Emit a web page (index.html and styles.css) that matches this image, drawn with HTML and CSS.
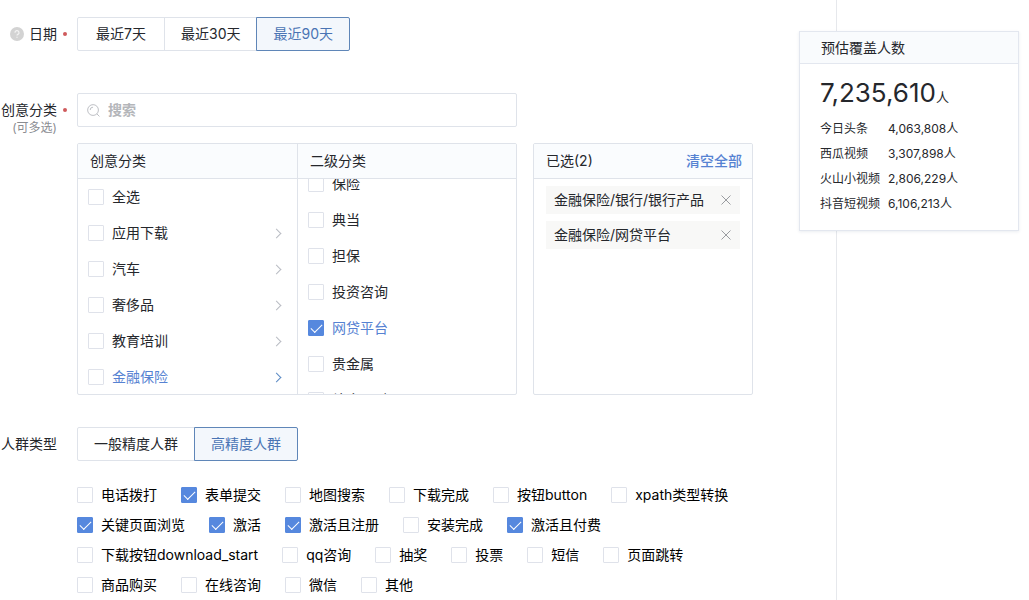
FILE: index.html
```html
<!DOCTYPE html>
<html lang="zh-CN">
<head>
<meta charset="utf-8">
<title>人群定向</title>
<link rel="stylesheet" href="styles.css">
</head>
<body>
<div class="page">
  <main class="main">
    <section class="field field-date">
      <div class="field-label" id="label-date">
        <svg class="help" viewBox="0 0 14 14" aria-hidden="true"><circle cx="7" cy="7" r="7" fill="#d3d3d3"/><path d="M5 5.8a2 2 0 1 1 2.9 1.6c-.6.3-.9.6-.9 1.1M7 9.8v1" fill="none" stroke="#f3f3f3" stroke-width="1.2"/></svg>
        <span>日期</span><i class="dot"></i>
      </div>
      <div class="segment" role="group" aria-labelledby="label-date">
        <button type="button" class="segment-btn">最近7天</button>
        <button type="button" class="segment-btn">最近30天</button>
        <button type="button" class="segment-btn active">最近90天</button>
      </div>
    </section>

    <section class="field field-category">
      <div class="field-label">
        <label for="search">创意分类</label><i class="dot"></i>
        <small class="hint">(可多选)</small>
      </div>
      <div class="picker">
        <div class="search">
          <svg class="search-icon" viewBox="0 0 14 14" aria-hidden="true"><circle cx="6.5" cy="6.5" r="5.8" fill="none" stroke="#b9bbc0"/><path d="M3.4 6.5A3.1 3.1 0 0 1 6.5 3.4M10.6 10.6L13.4 13.4" fill="none" stroke="#b9bbc0"/></svg>
          <input type="text" id="search" class="search-input" placeholder="搜索">
        </div>
        <div class="panel columns">
          <div class="column">
            <h2 class="panel-head">创意分类</h2>
            <ul class="list">
              <li class="item"><label class="check"><input type="checkbox">全选</label></li>
              <li class="item"><label class="check"><input type="checkbox">应用下载</label><i class="arrow"></i></li>
              <li class="item"><label class="check"><input type="checkbox">汽车</label><i class="arrow"></i></li>
              <li class="item"><label class="check"><input type="checkbox">奢侈品</label><i class="arrow"></i></li>
              <li class="item"><label class="check"><input type="checkbox">教育培训</label><i class="arrow"></i></li>
              <li class="item current"><label class="check"><input type="checkbox">金融保险</label><i class="arrow"></i></li>
            </ul>
          </div>
          <div class="column">
            <h2 class="panel-head">二级分类</h2>
            <ul class="list" id="sub-list">
              <li class="item"><label class="check"><input type="checkbox">保险</label></li>
              <li class="item"><label class="check"><input type="checkbox">典当</label></li>
              <li class="item"><label class="check"><input type="checkbox">担保</label></li>
              <li class="item"><label class="check"><input type="checkbox">投资咨询</label></li>
              <li class="item current"><label class="check"><input type="checkbox" checked>网贷平台</label></li>
              <li class="item"><label class="check"><input type="checkbox">贵金属</label></li>
              <li class="item"><label class="check"><input type="checkbox">综合理财</label></li>
            </ul>
          </div>
        </div>
        <div class="panel selected">
          <div class="panel-head"><span>已选(2)</span><button type="button" class="clear">清空全部</button></div>
          <ul class="tags">
            <li class="tag"><span>金融保险/银行/银行产品</span><button type="button" class="remove" aria-label="移除"><svg viewBox="0 0 10 10"><path d="M.5.5l9 9M9.5.5l-9 9"/></svg></button></li>
            <li class="tag"><span>金融保险/网贷平台</span><button type="button" class="remove" aria-label="移除"><svg viewBox="0 0 10 10"><path d="M.5.5l9 9M9.5.5l-9 9"/></svg></button></li>
          </ul>
        </div>
      </div>
    </section>

    <section class="field field-crowd">
      <div class="field-label" id="label-crowd"><span>人群类型</span></div>
      <div class="crowd">
        <div class="segment" role="group" aria-labelledby="label-crowd">
          <button type="button" class="segment-btn">一般精度人群</button>
          <button type="button" class="segment-btn active">高精度人群</button>
        </div>
        <div class="options">
          <label class="check"><input type="checkbox">电话拨打</label>
          <label class="check"><input type="checkbox" checked>表单提交</label>
          <label class="check"><input type="checkbox">地图搜索</label>
          <label class="check"><input type="checkbox">下载完成</label>
          <label class="check"><input type="checkbox">按钮button</label>
          <label class="check"><input type="checkbox">xpath类型转换</label>
          <label class="check"><input type="checkbox" checked>关键页面浏览</label>
          <label class="check"><input type="checkbox" checked>激活</label>
          <label class="check"><input type="checkbox" checked>激活且注册</label>
          <label class="check"><input type="checkbox">安装完成</label>
          <label class="check"><input type="checkbox" checked>激活且付费</label>
          <label class="check"><input type="checkbox">下载按钮download_start</label>
          <label class="check"><input type="checkbox">qq咨询</label>
          <label class="check"><input type="checkbox">抽奖</label>
          <label class="check"><input type="checkbox">投票</label>
          <label class="check"><input type="checkbox">短信</label>
          <label class="check"><input type="checkbox">页面跳转</label>
          <label class="check"><input type="checkbox">商品购买</label>
          <label class="check"><input type="checkbox">在线咨询</label>
          <label class="check"><input type="checkbox">微信</label>
          <label class="check"><input type="checkbox">其他</label>
        </div>
      </div>
    </section>
  </main>

  <aside class="side">
    <div class="card">
      <h2 class="card-head">预估覆盖人数</h2>
      <div class="card-body">
        <p class="total">7,235,610<small>人</small></p>
        <dl class="stats">
          <dt>今日头条</dt><dd>4,063,808人</dd>
          <dt>西瓜视频</dt><dd>3,307,898人</dd>
          <dt>火山小视频</dt><dd>2,806,229人</dd>
          <dt>抖音短视频</dt><dd>6,106,213人</dd>
        </dl>
      </div>
    </div>
  </aside>
</div>
<script src="app.js"></script>
</body>
</html>
```
FILE: styles.css
```css
* {
  box-sizing: border-box;
  margin: 0;
  padding: 0;
}

body {
  background: #fff;
  color: #25272c;
  font: 14px/20px Inter, "Noto Sans CJK SC", sans-serif;
}

button,
input {
  font: inherit;
  color: inherit;
}

ul {
  list-style: none;
}

.page {
  display: flex;
  min-height: 100vh;
}

.main {
  flex: 1;
  min-width: 0;
  padding: 17px 83px 0 0;
  border-right: 1px solid #e6e8ec;
}

.field {
  display: grid;
  grid-template-columns: 57px minmax(0, 1fr);
  column-gap: 20px;
}

.field-category {
  margin-top: 42px;
}

.field-crowd {
  margin-top: 32px;
}

.field-label {
  display: flex;
  flex-wrap: wrap;
  justify-content: flex-end;
  align-content: flex-start;
  align-items: center;
  padding-top: 7px;
  white-space: nowrap;
}

.field-label .help {
  width: 14px;
  height: 14px;
  margin-right: 5px;
}

.dot {
  width: 4px;
  height: 4px;
  margin-right: -10px;
  margin-left: 6px;
  border-radius: 50%;
  background: #cf5a5c;
}

.hint {
  width: 100%;
  color: #8a8c91;
  font-size: 12px;
  line-height: 16px;
  text-align: right;
}

.segment {
  display: flex;
}

.segment-btn {
  min-width: 88px;
  height: 34px;
  padding: 0 16px;
  border: 1px solid #dfe3ea;
  background: #fff;
  white-space: nowrap;
}

.segment-btn + .segment-btn {
  margin-left: -1px;
}

.segment-btn:first-child {
  border-radius: 2px 0 0 2px;
}

.segment-btn:last-child {
  border-radius: 0 2px 2px 0;
}

.segment-btn.active {
  border-color: #5f86b8;
  background: #f3f7fc;
  color: #4a74b4;
}

.picker {
  display: grid;
  grid-template-columns: minmax(0, 2fr) minmax(0, 1fr);
  gap: 16px;
}

.search {
  display: flex;
  align-items: center;
  grid-column: 1;
  height: 34px;
  padding: 0 9px;
  border: 1px solid #dfe3ea;
  border-radius: 2px;
}

.search-icon {
  width: 13px;
  height: 13px;
  margin-right: 8px;
}

.search-input {
  flex: 1;
  min-width: 0;
  border: 0;
  outline: 0;
  background: none;
}

.search-input::placeholder {
  color: #b4b6ba;
  font-weight: 700;
}

.panel {
  height: 252px;
  border: 1px solid #dfe3ea;
  border-radius: 2px;
  overflow: hidden;
}

.columns {
  display: grid;
  grid-row: 2;
  grid-template-columns: minmax(0, 1fr) minmax(0, 1fr);
}

.column {
  display: flex;
  flex-direction: column;
  height: 250px;
}

.column + .column {
  border-left: 1px solid #dfe3ea;
}

.panel-head {
  display: flex;
  flex: none;
  align-items: center;
  justify-content: space-between;
  height: 35px;
  padding: 0 10px 0 12px;
  border-bottom: 1px solid #dfe3ea;
  background: #fafcfe;
  font-size: 14px;
  font-weight: 400;
}

.list {
  flex: 1;
  overflow: hidden;
}

.item {
  display: flex;
  align-items: center;
  justify-content: space-between;
  height: 36px;
  padding: 0 17px 0 10px;
}

.item.current {
  color: #5682d2;
}

.arrow {
  width: 7px;
  height: 7px;
  border: solid #b9bcc3;
  border-width: 1px 1px 0 0;
  transform: rotate(45deg);
}

.current .arrow {
  border-color: #5b8ac4;
}

.check {
  display: flex;
  align-items: center;
  white-space: nowrap;
}

.check input {
  width: 16px;
  height: 16px;
  margin-right: 8px;
  border: 1px solid #dfe2ea;
  border-radius: 1px;
  background: #fff;
  appearance: none;
}

.check input:checked {
  display: grid;
  place-items: center;
  border-color: #5688de;
  background: #5688de;
}

.check input:checked::after {
  content: "";
  width: 10px;
  height: 5px;
  margin-bottom: 3px;
  border: solid #fff;
  border-width: 0 0 1px 1px;
  transform: rotate(-45deg);
}

.selected {
  grid-row: 2;
  grid-column: 2;
}

.clear {
  border: 0;
  background: none;
  color: #5682d2;
  font-weight: 500;
}

.tags {
  display: grid;
  gap: 7px;
  padding: 7px 12px;
}

.tag {
  display: flex;
  align-items: center;
  justify-content: space-between;
  height: 28px;
  padding: 0 9px 0 8px;
  background: #f8f8f7;
  white-space: nowrap;
}

.remove {
  display: flex;
  border: 0;
  background: none;
}

.remove svg {
  width: 10px;
  height: 10px;
  fill: none;
  stroke: #9a9ca0;
}

.options {
  display: flex;
  flex-wrap: wrap;
  column-gap: 24px;
  margin-top: 19px;
}

.options .check {
  height: 30px;
  color: #000;
}

.side {
  flex: 0 0 192px;
  padding: 31px 10px 0 0;
}

.card {
  position: relative;
  margin-left: -38px;
  border: 1px solid #e3e7ef;
  background: #fff;
  box-shadow: 0 1px 3px rgba(60, 80, 120, 0.1);
}

.card-head {
  padding: 6px 21px 5px;
  border-bottom: 1px solid #e3e7ef;
  background: #f9fbfd;
  font-size: 14px;
  font-weight: 400;
}

.card-body {
  padding: 12px 20px 14px;
}

.total {
  font-size: 26px;
  line-height: 34px;
}

.total small {
  font-size: 13px;
}

.stats {
  display: grid;
  grid-template-columns: 68px 1fr;
  margin-top: 2px;
  font-size: 12px;
  line-height: 25px;
  white-space: nowrap;
}
```
FILE: app.js
```js
document.getElementById('sub-list').scrollTop = 13;
```
